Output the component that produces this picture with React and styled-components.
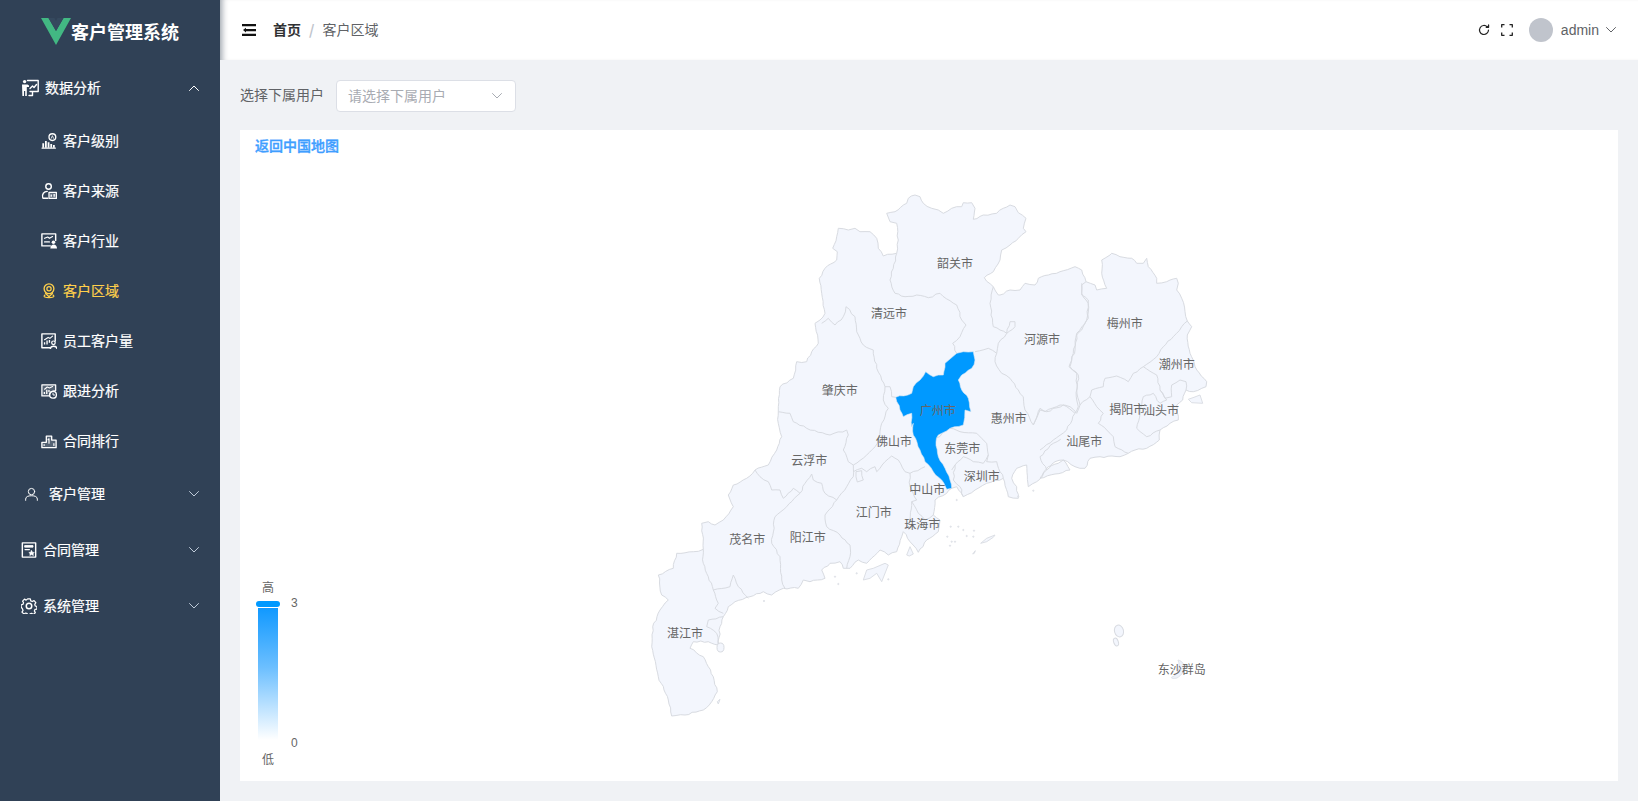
import React from 'react';
import styled, { createGlobalStyle } from 'styled-components';

const Global = createGlobalStyle`
  html, body { margin: 0; padding: 0; height: 100%; overflow: hidden; }
  body { font-family: "Noto Sans CJK SC", "Liberation Sans", sans-serif; background: #f0f2f5; }
  #root { height: 100%; }
  * { box-sizing: border-box; }
`;

const Shell = styled.div`display: flex; width: 1638px; height: 801px;`;
const Sidebar = styled.aside`width: 220px; flex: none; background: #304156; color: #fff; display: flex; flex-direction: column;`;
const Brand = styled.div`height: 60px; display: flex; align-items: center; padding: 2px 0 0 41px; flex: none;`;
const BrandTitle = styled.span`font-size: 18px; font-weight: 700; color: #fff; line-height: 24px; margin-top: -1px;`;
const Menu = styled.nav`display: flex; flex-direction: column;`;
const TopItem = styled.div`
  height: 56px; display: flex; align-items: center; font-size: 14px; color: #fff;
  padding-left: ${p => p.$pad}px; padding-right: 21px;
  gap: ${p => p.$gap}px;
`;
const SubItem = styled.div`
  height: 50px; display: flex; align-items: center; font-size: 14px; gap: 6px; padding-left: 41px;
  color: ${p => (p.$active ? '#ffd04b' : '#fff')};
`;
const MenuLabel = styled.span`margin-bottom: 2px; -webkit-text-stroke: .2px currentColor;`;
const Grow = styled.span`flex: 1;`;
const Glyph = styled.svg`flex: none; display: block; fill: none; stroke: currentColor; stroke-width: ${p => p.$w || 1.4}; stroke-linecap: round; stroke-linejoin: round;`;
const Caret = styled(Glyph)`color: ${p => p.$tone || '#bfcbd9'}; stroke-width: 1;`;

const Column = styled.div`flex: 1; min-width: 0; display: flex; flex-direction: column;`;
const Header = styled.header`
  height: 60px; flex: none; background: #fff; display: flex; align-items: center; padding: 0 22px 0 22px;
  box-shadow: inset 7px 0 6px -5px rgba(0, 21, 41, .4);
`;
const Crumbs = styled.div`display: flex; align-items: center; font-size: 14px; margin: 0 0 2px 17px; flex: 1;`;
const CrumbHome = styled.span`font-weight: 700; color: #303133;`;
const CrumbSep = styled.span`color: #c0c4cc; margin: 0 8px; font-weight: 700;`;
const CrumbNow = styled.span`color: #606266;`;
const Tools = styled.div`display: flex; align-items: center; color: #222;`;
const Avatar = styled.span`width: 24px; height: 24px; border-radius: 50%; background: #c0c4cc; margin: 0 8px 0 16px;`;
const UserName = styled.span`font-family: "Liberation Sans", sans-serif; font-size: 14px; color: #606266; margin-right: 7px;`;

const Content = styled.main`flex: 1; min-height: 0; padding: 20px; display: flex; flex-direction: column; gap: 18px;`;
const Filter = styled.div`display: flex; align-items: center; height: 32px; flex: none;`;
const FilterLabel = styled.label`font-size: 14px; color: #606266; margin: 0 12px 4px 0;`;
const Select = styled.div`
  width: 180px; height: 32px; border: 1px solid #dcdfe6; border-radius: 4px; background: #fff;
  display: flex; align-items: center; justify-content: space-between; padding: 0 13px 0 11px;
  font-size: 14px; color: #a8abb2;
`;
const Placeholder = styled.span`margin-bottom: 2px;`;
const Card = styled.section`flex: 1; min-height: 0; background: #fff; position: relative;`;
const BackLink = styled.a`
  position: absolute; left: 15px; top: 4px; font-size: 14px; line-height: 22px; color: #409eff; font-weight: 500; z-index: 1;
  -webkit-text-stroke: .35px currentColor;
`;
const MapCanvas = styled.svg`display: block; width: 100%; height: 100%;`;
const Land = styled.path`fill: #f3f6fd; stroke: #d8dbe1; stroke-width: 1; stroke-linejoin: round;`;
const Border = styled.path`fill: none; stroke: #d8dbe1; stroke-width: 1; stroke-linejoin: round;`;
const Isle = styled.path`fill: #f3f6fd; stroke: #dcdfe5; stroke-width: 1;`;
const Hot = styled.path`fill: #0099ff; stroke: #d9e6f2; stroke-width: .6; stroke-linejoin: round;`;
const CityName = styled.text`font-size: 12px; fill: #666; text-anchor: middle; dominant-baseline: central;`;

const Legend = styled.div`
  position: absolute; left: 16px; bottom: 13px; width: 60px; height: 190px;
  display: grid; grid-template-columns: 24px 1fr; grid-template-rows: 23px 6px 133px 28px; column-gap: 11px;
  font-size: 12px; color: #666; line-height: 18px;
`;
const LegendEnd = styled.span`text-align: center; grid-column: 1; align-self: ${p => (p.$low ? 'end' : 'start')};`;
const Knob = styled.span`grid-column: 1; grid-row: 2; height: 6px; border-radius: 3px; background: #0099ff;`;
const Ramp = styled.span`
  grid-column: 1; grid-row: 3; width: 20px; justify-self: center; margin-top: 1px;
  background: linear-gradient(#1199ff, #6cbfff 45%, #ffffff);
`;
const RampScale = styled.span`
  grid-column: 2; grid-row: 2 / 4; display: flex; flex-direction: column; justify-content: space-between;
  font-family: "Liberation Sans", sans-serif; margin: -7px 0 -12px 0;
`;

const parse = (s, ox, oy) => s.trim().split(/\s+/).map(p => {
  const [x, y] = p.split(',').map(Number);
  return [+(ox + x / 3).toFixed(1), +(oy + y / 3).toFixed(1)];
});
const Z4 = s => parse(s, 780, 180);
const Z5 = s => parse(s, 640, 400);
const Z7 = s => parse(s, 1000, 240);

// Coast and border lines are wiggly at the small scale: subdivide each traced leg with a fixed, repeatable wobble.
const wobble = (pts, amp = 0.8) => {
  const out = [];
  pts.forEach((p, i) => {
    out.push(p);
    const q = pts[i + 1];
    if (!q) return;
    const dx = q[0] - p[0], dy = q[1] - p[1];
    const len = Math.hypot(dx, dy);
    const n = Math.floor(len / 3.5);
    for (let k = 1; k < n; k++) {
      const t = k / n;
      const seed = Math.sin((p[0] + k * 7.13) * 12.9898 + (p[1] + k * 3.7) * 78.233) * 43758.5453;
      const r = (seed - Math.floor(seed)) * 2 - 1;
      out.push([
        +(p[0] + dx * t - (dy / len) * r * amp).toFixed(1),
        +(p[1] + dy * t + (dx / len) * r * amp).toFixed(1),
      ]);
    }
  });
  return out;
};
const open = (...segs) => 'M' + wobble(segs.flat()).map(p => p.join(' ')).join('L');
const closed = (...segs) => open(...segs) + 'Z';
const plain = pts => 'M' + pts.map(p => p.join(' ')).join('L') + 'Z';

const landPath = closed(
  Z4('320,100 345,95 362,82 380,70 385,55 405,45 420,50 430,70 455,85 475,90 490,100 515,85 545,80 550,68 575,68 585,85 580,118 610,105 650,100 670,85 690,75 705,80 715,98 738,115 730,145 738,155 715,175 690,195 665,210 660,240 640,275 613,293 640,320 655,345'),
  Z7('0,165 30,150 60,150 75,130 105,135 115,115 145,105 180,95 225,80 245,90 258,125 285,135 290,150 320,145 305,100 305,60 330,45 335,40 360,50 395,55 410,70 430,70 440,55 445,80 470,115 470,130 500,125 530,115 535,130 530,150 545,175 555,215 562,243 575,260 562,285 570,340 585,380 620,425 618,440 580,455 558,450 548,480 530,495 535,540 510,550 480,570 478,600 440,625 405,630 385,640 360,650 300,650 270,655 255,685 225,680 190,660 175,670 145,680 120,715'),
  Z5('1290,210 1270,180 1245,185 1220,210 1190,245 1165,260 1160,195 1130,205 1115,235 1130,260 1135,295 1105,290 1090,235 1040,250 1005,270 970,290 950,260 935,265 920,280 885,300 880,345 900,360 895,395 860,420 835,457 810,425 790,395 785,410 770,455 745,465 720,450 680,490 655,480 630,505 610,505 600,485 570,490 545,510 555,535 510,545 490,540 475,565 430,565 395,585 370,575 330,590 285,605 265,620 250,650 240,680 235,735 205,725 160,725 150,745 190,770 205,800 220,830 232,875 215,905 190,930 135,945 95,948 85,900 55,830 35,740 38,680 60,630 85,600 65,585 55,525 100,505 110,460 160,455 190,448 185,370 205,365 225,375 250,360 280,320 265,285 280,255 320,235 345,210 385,195 410,150 425,110 415,70 415,35'),
  Z4('-5,680 0,620 40,595 50,545 80,545 95,515 115,490 105,430 120,420 135,400 125,340 118,295 135,265 170,240 172,215 158,205 170,170 175,145 205,150 225,145 240,155 270,155 290,175 295,205 310,228 350,220 355,180 350,130 330,125')
);

const borders = [
  Z4('350,220 340,265 330,300 345,340 375,350 410,345 445,353 480,340 510,362 530,375 545,420 558,435 540,470 518,490 530,520'),
  Z4('640,320 630,370 640,440 680,460 655,490 650,520 645,545 665,580 690,595 715,630 730,650 735,690 760,735 780,690 800,695 850,675 885,700 895,680'),
  Z4('680,460 690,425 705,425 705,440 680,460'),
  Z4('585,515 625,505 650,520'),
  Z4('905,310 905,340 925,370 920,420 890,460 880,520 870,560 890,580 890,660 895,680'),
  Z4('125,430 145,415 165,435 190,410 198,380 225,410 230,455 250,495 280,510 290,565 305,600 315,620 330,620 335,650 347,652'),
  [...Z4('315,620 310,660 325,685'), ...Z5('725,70 712,130 680,165 640,195')],
  Z5('415,35 450,40 460,65 500,85 570,105 620,90 625,105 610,150 625,185 640,195'),
  Z5('640,195 640,230 620,260 590,300 555,280 545,250 520,240 515,222 495,250 480,280 460,265 430,295 420,270 395,270 385,245 360,230 345,210'),
  Z5('640,215 665,205 680,215 705,200 710,215 735,185 755,168 775,180 795,215 810,220 855,200'),
  Z5('648,215 665,212 670,240 652,246 648,215'),
  Z5('590,300 555,345 560,380 600,405 630,435 630,470 620,505'),
  Z5('480,280 440,320 405,350 395,430 420,470 425,540 435,565'),
  Z5('190,448 190,490 205,530 220,570 270,560 280,525 295,560 325,595'),
  Z5('220,570 235,610 225,625 250,640'),
  Z5('250,650 205,660 200,680 230,700 235,735'),
  Z5('810,220 810,260 830,300 815,305 810,360 795,385'),
  Z5('815,305 835,340 855,360 880,345'),
  Z5('888,115 930,85 960,95 1010,100 1040,130 1045,165 1030,190 1000,185 970,170 945,195 935,210'),
  Z5('1045,165 1040,185 1070,185 1090,235'),
  Z5('945,195 940,240 960,260 970,290'),
  Z5('1220,210 1200,170 1240,130 1262,118'),
  Z7('120,630 160,600 200,570 225,520'),
  Z7('100,555 120,505 135,515 180,495 210,500 230,520 240,495 270,470 290,500 310,520 295,550 320,570 340,590 345,620 385,640'),
  Z7('258,125 245,135 245,165 265,180 265,235 245,270 230,285 225,330 207,380 235,405 230,450 240,495'),
  Z7('270,470 275,450 310,440 315,415 350,408 385,425 400,400 430,380 470,405 480,450 500,480'),
  Z7('430,380 470,350 490,320 520,290 545,260 562,243'),
  Z7('480,450 495,475 515,470 515,435 540,420 558,425 558,450'),
  Z7('500,480 480,490 460,460 430,470 420,520 410,565 440,590 480,570'),
];

const hotPath = closed(
  Z4('530,520 550,515 580,515 585,540 575,565 545,585 535,600 545,630 565,655 573,695 555,690 550,735'),
  Z5('930,85 895,105 888,125 895,170 915,205 930,240 935,265 920,268 905,240 880,215 855,185 840,150 820,105 820,70'),
  Z4('395,740 395,700 370,710 360,690 347,652 395,640 400,620 420,600 437,575 460,590 490,585 495,550')
);

const isles = [
  Z7('565,478 582,472 600,465 608,490 575,488'),
  Z5('670,540 680,510 700,505 735,490 745,495 725,545 710,520 690,535'),
  Z5('1022,430 1040,415 1065,405 1060,412 1040,425'),
  Z5('800,465 810,440 820,462 808,468'),
  Z5('240,898 235,912 232,905'),
  Z5('998,462 1006,452 1003,460'),
];
const dots = '650,520 745,538 585,530 595,552 950,300 932,380 955,380 970,390 1002,392 980,408 1000,410 922,410 935,425 930,437 945,425 372,603 1135,290 1180,272'.split(' ').map(p => Z5(p)[0]);

const cities = [
  ['韶关市', 955, 262.7], ['清远市', 889, 312.7], ['河源市', 1042, 338.7], ['梅州市', 1124.7, 322.7],
  ['潮州市', 1176.7, 363.3], ['肇庆市', 839.7, 389], ['广州市', 937.7, 409], ['揭阳市', 1127.3, 408.7],
  ['汕头市', 1161, 409.3], ['惠州市', 1008.7, 417.7], ['佛山市', 894, 440.7], ['东莞市', 962.3, 447.7],
  ['汕尾市', 1084.3, 440.7], ['云浮市', 809.3, 459.3], ['深圳市', 981.7, 475.3], ['中山市', 927.3, 488.3],
  ['江门市', 873.7, 511.7], ['珠海市', 922.3, 523.7], ['茂名市', 747.3, 538.3], ['阳江市', 807.7, 536.3],
  ['湛江市', 685, 632.3], ['东沙群岛', 1181.7, 668.3],
];

const Icon = ({ size = 18, w, children }) => <Glyph width={size} height={size} viewBox="0 0 18 18" $w={w}>{children}</Glyph>;

const icons = {
  analysis: <>
    <circle cx="3.6" cy="2.600" r="1.700" fill="currentColor" stroke="none" />
    <path d="M1 5.500h5.500l1.500 1v1.500H5.800v9H4.200v-5H3v5H1.400z" fill="currentColor" stroke="none" />
    <path d="M6.500 1.500h10.700v11H9M11.500 12.500v4H8" />
    <path d="M9 9.500l2.500-2.500 1.500 1.500 2.500-3" />
  </>,
  level: <>
    <circle cx="12.800" cy="4.600" r="3.800" strokeWidth="1.500" />
    <path d="M11.500 6l1.300-3 1.300 3" strokeWidth=".9" />
    <path d="M1.200 17h15" strokeWidth="1.500" />
    <path d="M2.500 16.500v-5M5.500 16.500V9M8.500 16.500v-6M11.500 16.500v-4M14.500 16.500v-3" strokeWidth="2" strokeLinecap="butt" />
  </>,
  source: <>
    <circle cx="8.500" cy="4" r="3.100" strokeWidth="1.600" />
    <path d="M2 17c-1.500-4.500 1.500-7.500 5-7.500M2.500 17.200h5" strokeWidth="1.500" />
    <path d="M9 10.500h8.300v6.800H9z" fill="rgba(255,255,255,.25)" strokeWidth="1.400" />
    <path d="M11.500 15.500v-2.500M14.800 15.500v-3" strokeWidth="1.500" strokeLinecap="butt" />
  </>,
  industry: <>
    <path d="M10.500 14.500H1V1h15.500v7.500" strokeWidth="1.600" />
    <path d="M4 6l3.500-1.500 2 1.500 3.500-2M4 10h5.500" strokeWidth="1.300" />
    <circle cx="14" cy="10.500" r="2" fill="currentColor" stroke="none" />
    <path d="M10.500 17.500c0-6 7.500-6 7.500 0z" fill="currentColor" stroke="none" />
  </>,
  region: <>
    <circle cx="9" cy="6.500" r="5.500" strokeWidth="1.500" />
    <circle cx="9" cy="6.500" r="2.400" strokeWidth="1.400" />
    <path d="M5 11.500l4 4 4-4M4.500 13.500c-5.500 4 14.500 4 9 0" strokeWidth="1.300" />
  </>,
  staff: <>
    <path d="M10 16.500H1V1h15v8" strokeWidth="1.600" />
    <path d="M4 13v-2.500M6.800 13V8.500M9.500 11V8" strokeWidth="1.500" strokeLinecap="butt" />
    <path d="M4 7.500l4-2.500 2 1 3-2.500" strokeWidth="1.300" />
    <circle cx="14" cy="11" r="2" strokeWidth="1.400" />
    <path d="M10.500 17.500c.5-3.500 7-3.500 7.500 0" strokeWidth="1.600" />
  </>,
  follow: <>
    <path d="M1 2h15.500v6.500c-4 0-7 2.500-7 6H1z" fill="rgba(255,255,255,.18)" strokeWidth="1.400" />
    <path d="M3.800 12.500V10M6.500 12.500v-5M9 10V8" strokeWidth="1.500" strokeLinecap="butt" />
    <path d="M4 7l3-2.500 2.500 1L13 4" strokeWidth="1.200" />
    <circle cx="13.500" cy="13.300" r="3.800" strokeWidth="1.500" />
    <path d="M13.500 11.300v2.200h1.800" strokeWidth="1.100" />
  </>,
  rank: <>
    <path d="M1 16.500v-6h5V3.500h6v4.500h5v8.500z" fill="rgba(255,255,255,.18)" strokeWidth="1.500" />
    <path d="M9 6.500v5M7.900 7.500L9 6.500" strokeWidth="1.300" />
    <path d="M3.500 14v-1M14.500 14v-2" strokeWidth="1.300" />
  </>,
  contract: <>
    <path d="M1.500 1h15v16h-15z" strokeWidth="1.600" />
    <path d="M4.500 4h9v1.800h-9z" fill="currentColor" strokeWidth="1" />
    <path d="M4.500 8.500h5" strokeWidth="1.300" />
    <path d="M11.800 9.500l1.200 2 2 .3-1.400 1.400.4 2-2.200-1-1.900 1 .3-2-1.400-1.400 2-.3z" fill="currentColor" strokeWidth=".6" />
  </>,
  user: <><circle cx="9" cy="5.500" r="3.800" /><path d="M2 16v-1.500C2 11.500 5 10.500 9 10.500s7 1 7 4V16" /></>,
  gear: <>
    <circle cx="9" cy="9" r="3.100" strokeWidth="1.700" />
    <path d="M7.500 1h3l.5 2.200 1.700.8 2-1.100 2 2.300-1.200 1.900.4 1.700 2 .8v2.800l-2.200.5-.7 1.600 1.100 2-2.300 2-1.900-1.200-1.700.4-.7 2H7.500l-.5-2.100-1.700-.7-2 1.100-2.200-2.100 1.200-1.900-.6-1.700L.2 10.400V7.600l2-.5.7-1.700L1.800 3.500l2.100-2.200 1.900 1.100z" strokeWidth="1.400" />
  </>,
};

const Chevron = ({ up, tone }) => (
  <Caret width="10" height="6" viewBox="0 0 10 6" $tone={tone}><path d={up ? 'M.5 5.500L5 1l4.500 4.500' : 'M.5.500L5 5 9.500.500'} /></Caret>
);

const subs = [['level', '客户级别'], ['source', '客户来源'], ['industry', '客户行业'], ['region', '客户区域', true], ['staff', '员工客户量'], ['follow', '跟进分析'], ['rank', '合同排行']];

export default function App() {
  return (
    <Shell>
      <Global />
      <Sidebar>
        <Brand>
          <svg width="30" height="27" viewBox="0 0 30 27">
            <path d="M0 0h7.500L15 13 22.500 0H30L15 27z" fill="#42b883" />
            <path d="M7.500 0h6L15 3l1.500-3h6L15 13z" fill="#35495e" />
          </svg>
          <BrandTitle>客户管理系统</BrandTitle>
        </Brand>
        <Menu>
          <TopItem $pad={21} $gap={6}><Icon>{icons.analysis}</Icon><MenuLabel>数据分析</MenuLabel><Grow /><Chevron up tone="#fff" /></TopItem>
          {subs.map(([k, t, a]) => (
            <SubItem key={t} $active={a}><Icon size={16}>{icons[k]}</Icon><MenuLabel>{t}</MenuLabel></SubItem>
          ))}
          <TopItem $pad={24} $gap={10}><Icon size={15} w={1.2}>{icons.user}</Icon><MenuLabel>客户管理</MenuLabel><Grow /><Chevron /></TopItem>
          <TopItem $pad={21} $gap={6}><Icon size={16}>{icons.contract}</Icon><MenuLabel>合同管理</MenuLabel><Grow /><Chevron /></TopItem>
          <TopItem $pad={21} $gap={6}><Icon size={16}>{icons.gear}</Icon><MenuLabel>系统管理</MenuLabel><Grow /><Chevron /></TopItem>
        </Menu>
      </Sidebar>
      <Column>
        <Header>
          <svg width="14" height="12" viewBox="0 0 14 12"><path d="M0 0h14v2.200H0zM4 5h10v2.200H4zM0 9.800h14V12H0zM1 6.100l3-2.300v4.600z" fill="#111" /></svg>
          <Crumbs><CrumbHome>首页</CrumbHome><CrumbSep>/</CrumbSep><CrumbNow>客户区域</CrumbNow></Crumbs>
          <Tools>
            <Glyph width="12" height="12" viewBox="0 0 12 12" $w={1.2}><path d="M10.500 6a4.500 4.500 0 1 1-1.300-3.200" /><path d="M10.600.900v2.400H8.200" fill="currentColor" /></Glyph>
            <Glyph width="12" height="12" viewBox="0 0 12 12" $w={1.300} style={{ marginLeft: 11, strokeLinecap: 'butt' }}><path d="M.700 3.500V.700h2.800M8.500.700h2.800v2.800M11.300 8.500v2.800H8.500M3.500 11.300H.700V8.500" /></Glyph>
            <Avatar />
            <UserName>admin</UserName>
            <Chevron tone="#606266" />
          </Tools>
        </Header>
        <Content>
          <Filter>
            <FilterLabel>选择下属用户</FilterLabel>
            <Select><Placeholder>请选择下属用户</Placeholder><Chevron tone="#a8abb2" /></Select>
          </Filter>
          <Card>
            <BackLink>返回中国地图</BackLink>
            <MapCanvas viewBox="240 130 1378 651">
              <Land d={landPath} />
              {borders.map((b, i) => <Border key={i} d={open(b)} />)}
              {isles.map((b, i) => <Isle key={i} d={plain(b)} />)}
              {dots.map(([x, y], i) => <Isle key={i} d={`M${x - .6} ${y}a.6 .6 0 1 0 1.200 0a.6 .6 0 1 0-1.200 0`} />)}
              <ellipse cx="720.500" cy="647.500" rx="3.500" ry="4.500" fill="#f3f6fd" stroke="#d8dbe1" />
              <ellipse cx="1119" cy="631" rx="4.500" ry="6" fill="#f3f6fd" stroke="#d8dbe1" transform="rotate(-15 1119 631)" />
              <ellipse cx="1116" cy="642" rx="2.300" ry="4" fill="#f3f6fd" stroke="#d8dbe1" transform="rotate(-20 1116 642)" />
              <path d="M1178 660c8 2 9 12-1 18c-4 1-7 0-5-1c6-2 9-10 6-17z" fill="#eef2fa" stroke="#dfe3ea" />
              <Hot d={hotPath} />
              {cities.map(([t, x, y]) => <CityName key={t} x={x} y={y}>{t}</CityName>)}
            </MapCanvas>
            <Legend>
              <LegendEnd>高</LegendEnd>
              <Knob />
              <Ramp />
              <RampScale><span>3</span><span>0</span></RampScale>
              <LegendEnd $low>低</LegendEnd>
            </Legend>
          </Card>
        </Content>
      </Column>
    </Shell>
  );
}
